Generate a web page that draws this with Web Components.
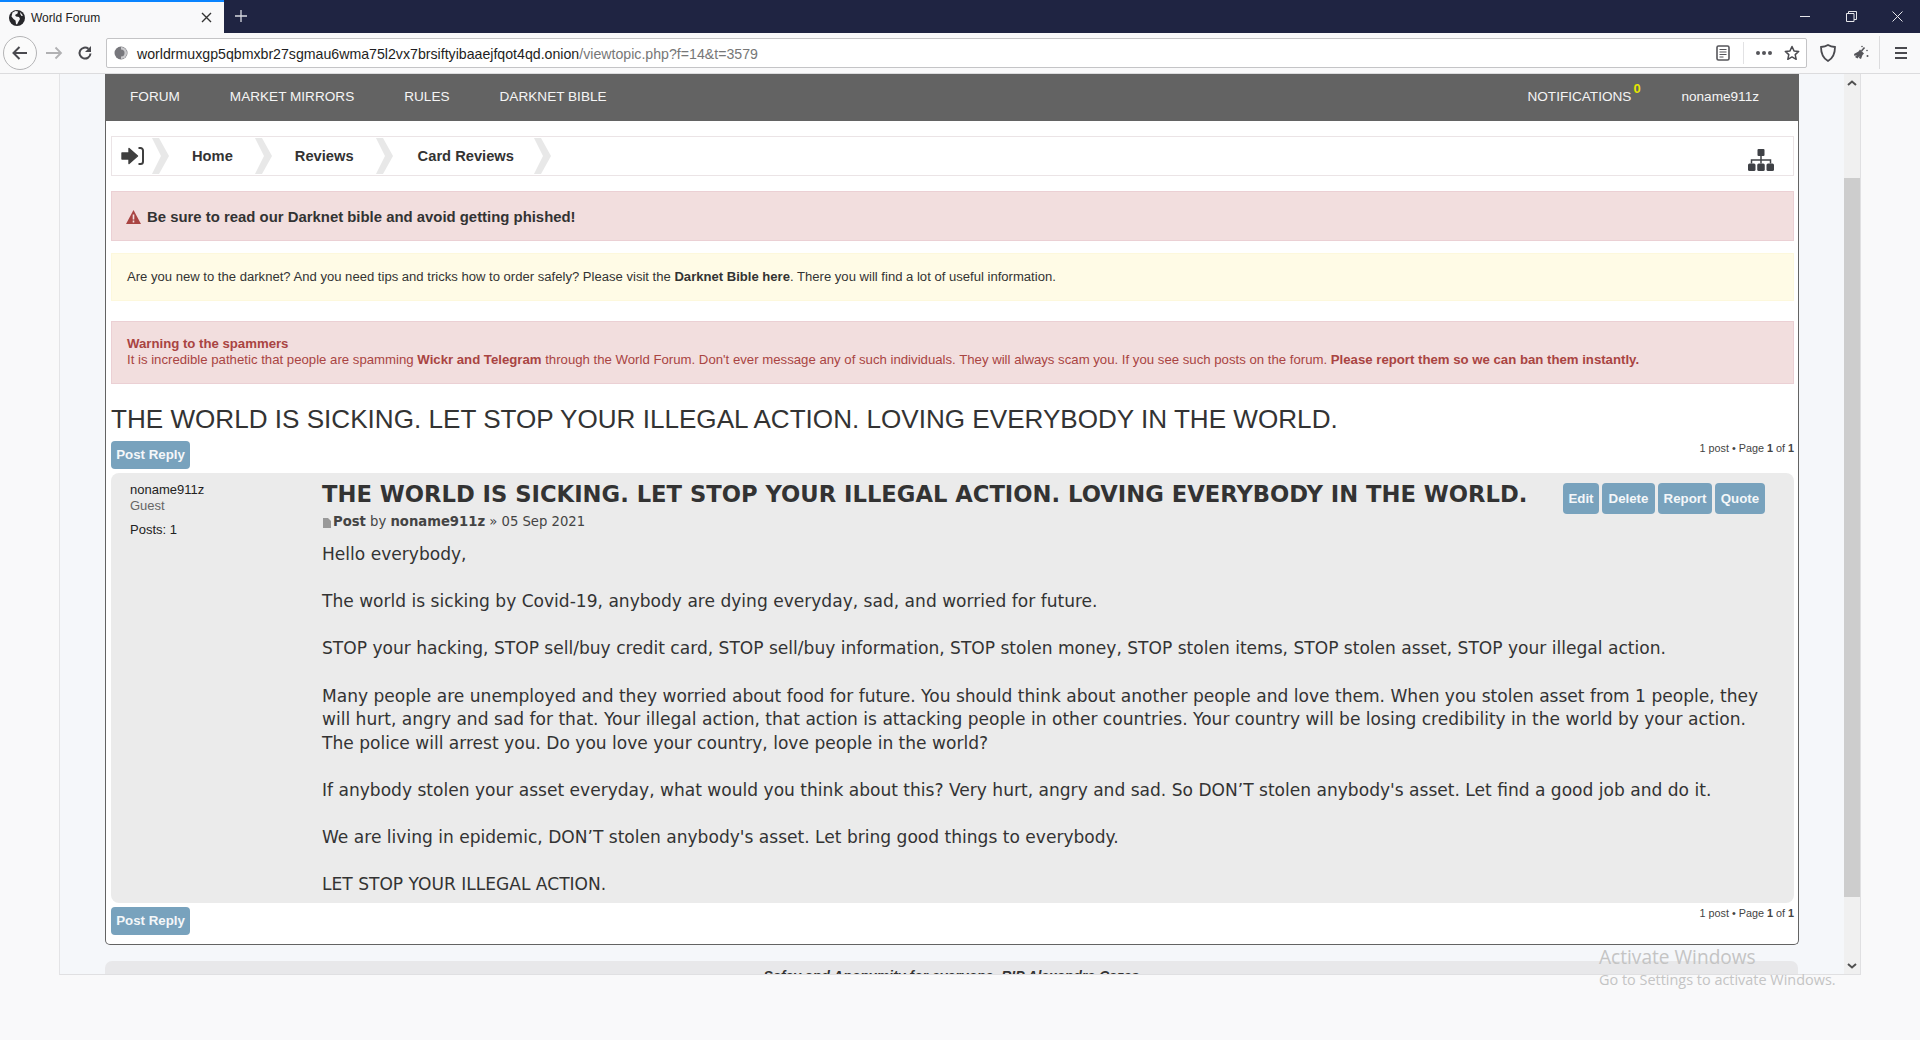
<!DOCTYPE html>
<html lang="en">
<head>
<meta charset="utf-8">
<title>World Forum</title>
<style>
  html, body { margin: 0; height: 100%; overflow: hidden; background: #f9f9fa; }
  body { font-family: "Liberation Sans", Arial, sans-serif; }
</style>
</head>
<body>
<browser-window>
  <forum-page></forum-page>
</browser-window>

<script>
// shared look of the little blue phpBB buttons
const BUTTON_CSS = `
  .btn {
    display: inline-flex; align-items: center; justify-content: center;
    background: #78a2bd; color: #f4f7f9; border-radius: 4px; padding-bottom: 1px;
    font: bold 13.3px "Liberation Sans", Arial, sans-serif; box-sizing: border-box;
  }
`;

class BrowserWindow extends HTMLElement {
  constructor() {
    super();
    this.attachShadow({ mode: 'open' }).innerHTML = `
      <style>
        :host { display: flex; flex-direction: column; width: 1920px; height: 1040px; position: relative; overflow: hidden; }
        .tabs { height: 33px; background: #1f2442; display: flex; align-items: stretch; flex: none; }
        .tab { width: 224px; background: #f9f9fa; border-top: 2px solid #0a84ff; box-sizing: border-box; display: flex; align-items: center; padding: 0 0 0 9px; font: 12px "Liberation Sans", sans-serif; color: #222; }
        .tab span { margin-left: 6px; flex: 1; }
        .tab svg.close { margin-right: 12px; }
        .plus { margin: 9px 0 0 10px; }
        .winctl { margin-left: auto; display: flex; align-items: center; gap: 35px; padding-right: 17px; }
        .nav { flex: none; background: #f9f9fa; border-bottom: 1px solid #dcdcde; box-sizing: border-box; height: 41px; display: flex; align-items: center; position: relative; }
        .back { width: 34px; height: 34px; border: 1px solid #b4b4b6; border-radius: 50%; box-sizing: border-box; margin-left: 3px; background: #fbfbfb; display: flex; align-items: center; justify-content: center; }
        .urlbar { position: absolute; left: 106px; width: 1701px; top: 5px; height: 30px; box-sizing: border-box; background: #fff; border: 1px solid #c4c4c6; border-radius: 2px; display: flex; align-items: center; padding-left: 7px; font: 14.17px "Liberation Sans", sans-serif; color: #1e1e22; }
        .urlbar i { font-style: normal; color: #777; }
        .urlbar .url { margin-left: 9px; padding-top: 1px; }
        .uright { margin-left: auto; display: flex; align-items: center; }
        .content { flex: none; height: 901px; margin-left: 59px; width: 1802px; box-sizing: border-box; border-left: 1px solid #e4e4e6; border-right: 1px solid #e0e0e2; border-bottom: 1px solid #e0e0e2; background: #f5f7fa; display: flex; overflow: hidden; position: relative; }
        .view { width: 1784px; height: 100%; overflow: hidden; padding-left: 45px; box-sizing: border-box; }
        .scroll { width: 16px; flex: none; background: #f0f0f0; position: relative; display: flex; flex-direction: column; justify-content: space-between; align-items: center; padding: 4px 0; box-sizing: border-box; }
        .thumb { position: absolute; left: 0; right: 0; top: 104px; height: 719px; background: #cdcdcd; }
        .activate { position: absolute; left: 1599px; top: 944px; color: #c4c4c4; font-family: "Open Sans", "Noto Sans", sans-serif; pointer-events: none; white-space: nowrap; }
        .activate b { display: block; font-weight: 400; font-size: 19.1px; line-height: 26px; }
        .activate span { display: block; font-size: 14.45px; line-height: 20px; }
      </style>
      <div class="tabs">
        <div class="tab">
          <svg width="16" height="16" viewBox="0 0 16 16"><circle cx="8" cy="8" r="8" fill="#26262a"/><path d="M3.500 2.500l3-1.500 2.500.5-.5 2-2.500 1.500 1 1.500 3 .5 1 2-1.500 2.500-1.500 3-1-.5-.5-3.500-2-1.500-2-2.500zM11 2l3 3.500-1.500.5-1-1.500z" fill="#f4f4f6"/></svg>
          <span>World Forum</span>
          <svg class="close" width="11" height="11" viewBox="0 0 11 11"><path d="M1 1l9 9M10 1l-9 9" stroke="#333" stroke-width="1.400"/></svg>
        </div>
        <svg class="plus" width="14" height="14" viewBox="0 0 14 14"><path d="M7 1v12M1 7h12" stroke="#d8d9e0" stroke-width="1.300"/></svg>
        <div class="winctl">
          <svg width="11" height="11" viewBox="0 0 11 11"><path d="M0 5.500h10" stroke="#e6e6ea"/></svg>
          <svg width="11" height="11" viewBox="0 0 11 11"><path d="M.5 2.500h7.500v8h-7.500zM2.500 2.500v-2h8v8h-2.500" fill="none" stroke="#e6e6ea"/></svg>
          <svg width="11" height="11" viewBox="0 0 11 11"><path d="M.5.5l10 10M10.500.5l-10 10" stroke="#e6e6ea"/></svg>
        </div>
      </div>
      <div class="nav">
        <div class="back"><svg width="18" height="16" viewBox="0 0 18 16"><path d="M16 8H3M8.500 2L2.500 8l6 6" fill="none" stroke="#4a4a4f" stroke-width="2"/></svg></div>
        <svg style="margin-left:8px" width="18" height="14" viewBox="0 0 18 14"><path d="M1 7h15M10.500 1.500L16 7l-5.500 5.500" fill="none" stroke="#b1b1b3" stroke-width="1.800"/></svg>
        <svg style="margin-left:14px" width="16" height="16" viewBox="0 0 16 16"><path d="M13.500 8.500A5.500 5.500 0 1 1 11.500 3.800" fill="none" stroke="#4a4a4f" stroke-width="2"/><path d="M14 1v6H8z" fill="#4a4a4f"/></svg>
        <div class="urlbar">
          <svg width="14" height="14" viewBox="0 0 14 14"><circle cx="7" cy="7" r="6.500" fill="#77777c"/><path d="M7 1a6 6 0 0 1 0 12" fill="#c9c9cc"/><path d="M7 3.500a3.500 3.500 0 0 1 0 7" fill="#77777c"/></svg>
          <span class="url">worldrmuxgp5qbmxbr27sgmau6wma75l2vx7brsiftyibaaejfqot4qd.onion<i>/viewtopic.php?f=14&amp;t=3579</i></span>
          <div class="uright">
            <svg width="14" height="16" viewBox="0 0 14 16"><rect x="1" y="1" width="12" height="14" rx="1.500" fill="none" stroke="#55555a" stroke-width="1.600"/><path d="M3.500 4.500h7M3.500 7h7M3.500 9.500h7M3.500 12h4" stroke="#55555a" stroke-width="1.100"/></svg>
            <div style="width:1px;height:22px;background:#e2e2e4;margin:0 12px 0 13px"></div>
            <svg width="16" height="4" viewBox="0 0 16 4"><circle cx="2" cy="2" r="2" fill="#55555a"/><circle cx="8" cy="2" r="2" fill="#55555a"/><circle cx="14" cy="2" r="2" fill="#55555a"/></svg>
            <svg style="margin:0 6px 0 12px" width="16" height="16" viewBox="0 0 16 16"><path d="M8 1.500l2 4.400 4.700.5-3.500 3.200 1 4.700L8 11.900l-4.200 2.400 1-4.700-3.500-3.200 4.700-.5z" fill="none" stroke="#4a4a4f" stroke-width="1.500" stroke-linejoin="round"/></svg>
          </div>
        </div>
        <svg style="position:absolute;left:1820px;top:11px" width="16" height="18" viewBox="0 0 16 18"><path d="M8 1c2 1.200 4.300 1.800 7 2 0 6-1.500 11-7 14C2.500 14 1 9 1 3c2.700-.2 5-.8 7-2z" fill="none" stroke="#4a4a4f" stroke-width="1.800"/></svg>
        <svg style="position:absolute;left:1853px;top:12px" width="16" height="16" viewBox="0 0 16 16"><path d="M11.500 2.500L8.500 6" stroke="#55555a" stroke-width="1.600"/><path d="M7 4.500l4 4-1.500 1.500L8 14l-2-1 .5-2-2 2.500L2 12l2-2-2.500 1L1 9l4.500-2.500z" fill="#55555a"/><circle cx="14.500" cy="11" r="1" fill="#55555a"/><circle cx="9" cy="1.500" r=".8" fill="#55555a"/><circle cx="14" cy="5.500" r=".8" fill="#55555a"/></svg>
        <div style="position:absolute;left:1879px;top:3px;width:1px;height:33px;background:#dcdcde"></div>
        <svg style="position:absolute;left:1895px;top:13px" width="12" height="14" viewBox="0 0 12 14"><path d="M0 2h12M0 7h12M0 12h12" stroke="#4a4a4f" stroke-width="2"/></svg>
      </div>
      <div class="content">
        <div class="view"><slot></slot></div>
        <div class="scroll">
          <svg width="10" height="6" viewBox="0 0 10 6" style="margin-top:2px"><path d="M1 5l4-3.500L9 5" fill="none" stroke="#505050" stroke-width="2"/></svg>
          <div class="thumb"></div>
          <svg width="10" height="6" viewBox="0 0 10 6" style="margin-bottom:1px"><path d="M1 1l4 3.500L9 1" fill="none" stroke="#505050" stroke-width="2"/></svg>
        </div>
      </div>
      <div class="activate"><b>Activate Windows</b><span>Go to Settings to activate Windows.</span></div>
    `;
  }
}
customElements.define('browser-window', BrowserWindow);

class ForumNav extends HTMLElement {
  constructor() {
    super();
    this.attachShadow({ mode: 'open' }).innerHTML = `
      <style>
        :host { display: flex; align-items: center; height: 47px; background: #636363; color: #f5f5f5; font-size: 13.6px; padding: 0 39px 2px 25px; box-sizing: border-box; }
        a { margin-right: 50px; }
        .right { margin-left: auto; display: flex; }
        .right a { margin: 0 0 0 50px; position: relative; }
        sup { position: absolute; left: 100%; top: -8px; margin-left: 2px; color: #e6e600; font-size: 13px; line-height: 15px; font-weight: bold; }
      </style>
      <a>FORUM</a><a>MARKET MIRRORS</a><a>RULES</a><a>DARKNET BIBLE</a>
      <div class="right"><a>NOTIFICATIONS<sup>0</sup></a><a>noname911z</a></div>
    `;
  }
}
customElements.define('forum-nav', ForumNav);

class ForumCrumbs extends HTMLElement {
  constructor() {
    super();
    const chev = `<svg class="chev" width="17" height="36" viewBox="0 0 17 36"><path d="M0 0h7l10 18L7 36H0l9-18z" fill="#e8e8e8"/></svg>`;
    this.attachShadow({ mode: 'open' }).innerHTML = `
      <style>
        :host { display: flex; align-items: center; height: 40px; box-sizing: border-box; border: 1px solid #ebe4e6; background: #fff; margin: 0 4px 0 5px; font: bold 14.7px "Liberation Sans", sans-serif; color: #333; }
        .login { margin: 0 8px 0 9px; }
        a { white-space: nowrap; margin: -1px 22px 0 23px; }
        .tree { margin: 8px 19px 0 auto; }
      </style>
      <svg class="login" width="23" height="18" viewBox="0 0 23 18"><path d="M1 6h7V1.500L16.500 9 8 16.500V12H1z" fill="#3f3f3f" stroke="#3f3f3f" stroke-width="1.400" stroke-linejoin="round"/><path d="M17.500 1h2a2.500 2.500 0 0 1 2.500 2.500v11a2.500 2.500 0 0 1-2.500 2.500h-2" fill="none" stroke="#3f3f3f" stroke-width="2"/></svg>
      ${chev}<a>Home</a>${chev}<a>Reviews</a>${chev}<a style="margin:-1px 20px 0 25px">Card Reviews</a>${chev}
      <svg class="tree" width="26" height="22" viewBox="0 0 26 22"><g fill="#3f4146"><rect x="9.500" y="0" width="7" height="7" rx="1"/><rect x="0" y="14.500" width="7.500" height="7.500" rx="1.500"/><rect x="9.250" y="14.500" width="7.500" height="7.500" rx="1.500"/><rect x="18.500" y="14.500" width="7.500" height="7.500" rx="1.500"/></g><path d="M13 7v7.500M3.500 14.500v-3.500h19v3.500" fill="none" stroke="#3f4146" stroke-width="1.500"/></svg>
    `;
  }
}
customElements.define('forum-crumbs', ForumCrumbs);

class ForumNotice extends HTMLElement {
  constructor() {
    super();
    this.attachShadow({ mode: 'open' }).innerHTML = `
      <style>
        :host { display: block; margin: 0 4px 0 5px; box-sizing: border-box; border: 1px solid; padding: 0 15px; font-size: 13.08px; }
        :host([kind=danger]) { background: #f2dede; border-color: #ebd0d4; color: #a94442; font-size: 13.2px; }
        :host([kind=alert]) { background: #f2dede; border-color: #ebd0d4; color: #333; height: 50px; display: flex; align-items: center; font-size: 14.9px; font-weight: bold; padding: 1px 15px 0 14px; }
        :host([kind=info]) { background: #fffbe6; border-color: #fdf8dc; color: #333; height: 48px; display: flex; align-items: center; padding-bottom: 1px; }
      </style>
      <slot></slot>
    `;
  }
}
customElements.define('forum-notice', ForumNotice);

class ForumPost extends HTMLElement {
  constructor() {
    super();
    this.attachShadow({ mode: 'open' }).innerHTML = `
      <style>
        ${BUTTON_CSS}
        :host { display: flex; margin: 0 4px 0 5px; background: #ebebeb; border-radius: 8px; height: 430px; box-sizing: border-box; color: #333; flex: none; }
        .author { width: 211px; flex: none; padding: 9px 0 0 19px; box-sizing: border-box; font-size: 13px; line-height: 16px; color: #222; }
        .author small { display: block; font-size: 13px; color: #666; }
        .author p { margin: 8px 0 0; }
        .body { flex: 1; min-width: 0; position: relative; font-family: "DejaVu Sans", Verdana, sans-serif; padding-top: 6px; }
        h3 { margin: 0; font: bold 22.67px/30px "DejaVu Sans", Verdana, sans-serif; color: #333; white-space: nowrap; }
        .meta { font-size: 13.2px; line-height: 18px; margin-top: 4px; color: #444; display: flex; align-items: center; white-space: pre; }
        .meta svg { margin-right: 1px; }
        .text { margin-top: 12px; font-size: 17.07px; line-height: 23.6px; color: #333; padding-right: 30px; }
        ::slotted(p) { margin: 0 0 23.6px; }
        .actions { position: absolute; right: 29px; top: 10px; display: flex; gap: 3px; }
        .btn { height: 31px; }
      </style>
      <div class="author">noname911z<small>Guest</small><p>Posts: 1</p></div>
      <div class="body">
        <h3>THE WORLD IS SICKING. LET STOP YOUR ILLEGAL ACTION. LOVING EVERYBODY IN THE WORLD.</h3>
        <div class="meta"><svg width="10" height="11" viewBox="0 0 10 11"><path d="M1 1h5l3 3v7H1z" fill="#999"/></svg><b>Post</b> by <b>noname911z</b> » 05 Sep 2021</div>
        <div class="text"><slot></slot></div>
        <div class="actions">
          <span class="btn" style="width:36px">Edit</span><span class="btn" style="width:53px">Delete</span><span class="btn" style="width:54px">Report</span><span class="btn" style="width:50px">Quote</span>
        </div>
      </div>
    `;
  }
}
customElements.define('forum-post', ForumPost);

class ForumPage extends HTMLElement {
  constructor() {
    super();
    this.attachShadow({ mode: 'open' }).innerHTML = `
      <style>
        ${BUTTON_CSS}
        :host { display: block; width: 1694px; font-family: "Liberation Sans", Arial, sans-serif; }
        .wrap { background: #fff; border: 1px solid #636363; border-top: 0; border-radius: 0 0 5px 5px; box-sizing: border-box; height: 871px; display: flex; flex-direction: column; }
        forum-nav { margin: 0 0 0 -1px; }
        h2 { margin: 17px 0 0 5px; font: 400 26.1px/36px "Liberation Sans", sans-serif; color: #333; white-space: nowrap; }
        .bar { display: flex; justify-content: space-between; margin: 4px 4px 0 5px; height: 28px; font-size: 10.8px; color: #444; flex: none; }
        .bar.top { margin-bottom: 4px; }
        .bar .pg { padding-top: 1px; line-height: 13px; }
        .btn { width: 79px; height: 28px; }
        .foot { width: 1693px; height: 60px; margin-top: 16px; background: #e8e8ea; border-radius: 7px 7px 0 0; text-align: center; font: italic bold 14px/16px "Liberation Sans", sans-serif; color: #333; padding-top: 7px; box-sizing: border-box; }
      </style>
      <div class="wrap">
        <forum-nav></forum-nav>
        <forum-crumbs style="margin-top:15px"></forum-crumbs>
        <forum-notice kind="alert" style="margin-top:15px"><svg width="15" height="14" viewBox="0 0 15 14" style="margin-right:6px"><path d="M7.500 0L15 14H0z" fill="#a94442"/><path d="M7.500 4.500v5M7.500 10.500v2" stroke="#f2dede" stroke-width="1.600"/></svg>Be sure to read our Darknet bible and avoid getting phished!</forum-notice>
        <forum-notice kind="info" style="margin-top:12px"><span>Are you new to the darknet? And you need tips and tricks how to order safely? Please visit the <b>Darknet Bible here</b>. There you will find a lot of useful information.</span></forum-notice>
        <forum-notice kind="danger" style="margin-top:20px;padding-top:14px;height:63px;line-height:16px"><b>Warning to the spammers</b><br>It is incredible pathetic that people are spamming <b>Wickr and Telegram</b> through the World Forum. Don't ever message any of such individuals. They will always scam you. If you see such posts on the forum. <b>Please report them so we can ban them instantly.</b></forum-notice>
        <h2>THE WORLD IS SICKING. LET STOP YOUR ILLEGAL ACTION. LOVING EVERYBODY IN THE WORLD.</h2>
        <div class="bar top"><span class="btn">Post Reply</span><span class="pg">1 post • Page <b>1</b> of <b>1</b></span></div>
        <forum-post>
          <p>Hello everybody,</p>
          <p>The world is sicking by Covid-19, anybody are dying everyday, sad, and worried for future.</p>
          <p>STOP your hacking, STOP sell/buy credit card, STOP sell/buy information, STOP stolen money, STOP stolen items, STOP stolen asset, STOP your illegal action.</p>
          <p>Many people are unemployed and they worried about food for future. You should think about another people and love them. When you stolen asset from 1 people, they will hurt, angry and sad for that. Your illegal action, that action is attacking people in other countries. Your country will be losing credibility in the world by your action. The police will arrest you. Do you love your country, love people in the world?</p>
          <p>If anybody stolen your asset everyday, what would you think about this? Very hurt, angry and sad. So DON’T stolen anybody's asset. Let find a good job and do it.</p>
          <p>We are living in epidemic, DON’T stolen anybody's asset. Let bring good things to everybody.</p>
          <p>LET STOP YOUR ILLEGAL ACTION.</p>
        </forum-post>
        <div class="bar"><span class="btn">Post Reply</span><span class="pg" style="padding-top:0">1 post • Page <b>1</b> of <b>1</b></span></div>
      </div>
      <div class="foot">Safey and Anonymity for everyone. RIP Alexandre Cazes</div>
    `;
  }
}
customElements.define('forum-page', ForumPage);
</script>
</body>
</html>
